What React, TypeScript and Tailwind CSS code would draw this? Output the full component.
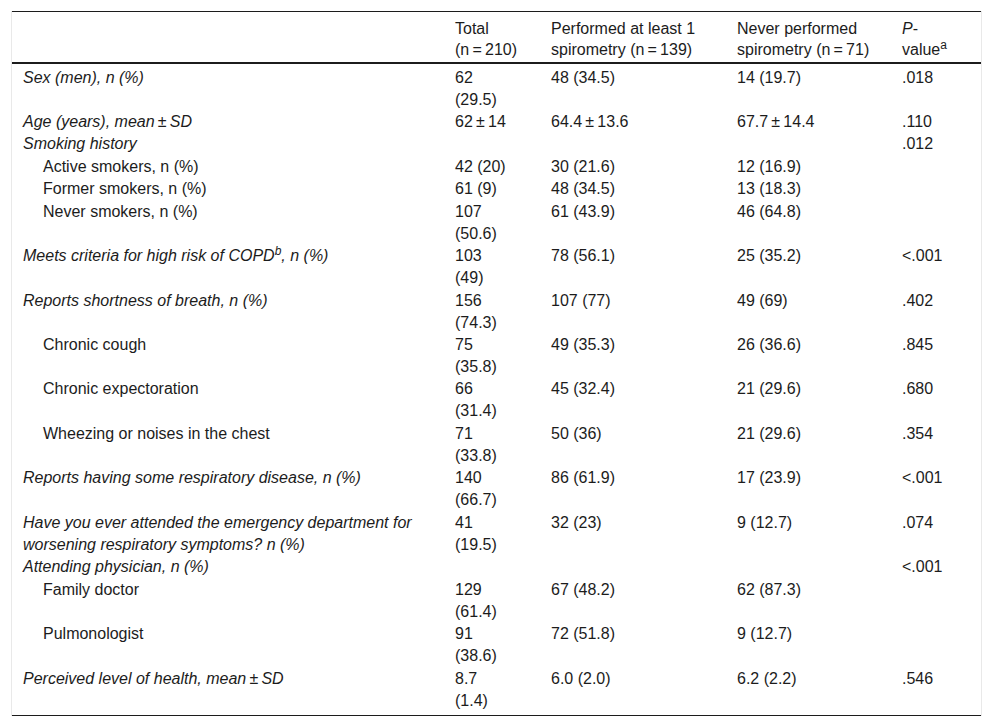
import type { ReactNode } from 'react';

type Row = {
    label: ReactNode;
    italic?: boolean;
    indent?: boolean;
    total?: ReactNode;
    performed?: ReactNode;
    never?: ReactNode;
    p?: string;
};

const T = '\u2009';

// keeps "62 ± 14" and "(n = 210)" on one line, with thin spaces like the print layout
function NoWrap({ children }: { children: ReactNode }) {
    return <span className="whitespace-nowrap">{children}</span>;
}

function pm(a: string, b: string) {
    return <NoWrap>{`${a}${T}±${T}${b}`}</NoWrap>;
}

const rows: Row[] = [
    { label: 'Sex (men), n (%)', italic: true, total: '62 (29.5)', performed: '48 (34.5)', never: '14 (19.7)', p: '.018' },
    {
        label: <>Age (years), mean{pm('', 'SD')}</>,
        italic: true,
        total: pm('62', '14'),
        performed: pm('64.4', '13.6'),
        never: pm('67.7', '14.4'),
        p: '.110',
    },
    { label: 'Smoking history', italic: true, p: '.012' },
    { label: 'Active smokers, n (%)', indent: true, total: '42 (20)', performed: '30 (21.6)', never: '12 (16.9)' },
    { label: 'Former smokers, n (%)', indent: true, total: '61 (9)', performed: '48 (34.5)', never: '13 (18.3)' },
    { label: 'Never smokers, n (%)', indent: true, total: '107 (50.6)', performed: '61 (43.9)', never: '46 (64.8)' },
    {
        label: (
            <>
                Meets criteria for high risk of COPD<sup>b</sup>, n (%)
            </>
        ),
        italic: true,
        total: '103 (49)',
        performed: '78 (56.1)',
        never: '25 (35.2)',
        p: '<.001',
    },
    { label: 'Reports shortness of breath, n (%)', italic: true, total: '156 (74.3)', performed: '107 (77)', never: '49 (69)', p: '.402' },
    { label: 'Chronic cough', indent: true, total: '75 (35.8)', performed: '49 (35.3)', never: '26 (36.6)', p: '.845' },
    { label: 'Chronic expectoration', indent: true, total: '66 (31.4)', performed: '45 (32.4)', never: '21 (29.6)', p: '.680' },
    { label: 'Wheezing or noises in the chest', indent: true, total: '71 (33.8)', performed: '50 (36)', never: '21 (29.6)', p: '.354' },
    { label: 'Reports having some respiratory disease, n (%)', italic: true, total: '140 (66.7)', performed: '86 (61.9)', never: '17 (23.9)', p: '<.001' },
    {
        label: 'Have you ever attended the emergency department for worsening respiratory symptoms? n (%)',
        italic: true,
        total: '41 (19.5)',
        performed: '32 (23)',
        never: '9 (12.7)',
        p: '.074',
    },
    { label: 'Attending physician, n (%)', italic: true, p: '<.001' },
    { label: 'Family doctor', indent: true, total: '129 (61.4)', performed: '67 (48.2)', never: '62 (87.3)' },
    { label: 'Pulmonologist', indent: true, total: '91 (38.6)', performed: '72 (51.8)', never: '9 (12.7)' },
    {
        label: <>Perceived level of health, mean{pm('', 'SD')}</>,
        italic: true,
        total: '8.7 (1.4)',
        performed: '6.0 (2.0)',
        never: '6.2 (2.2)',
        p: '.546',
    },
];

const cell = 'align-top text-left font-normal pl-[11px] pt-[0.45px]';
const head = 'pl-[11px] pt-[7px] pb-[2px] text-left align-top font-normal';

export default function App() {
    return (
        <div className="min-h-[726px] bg-white pt-[11px] font-['Liberation_Sans',Arial,sans-serif] text-[16px] text-[#1c1c1c]">
            <div className="ml-[11px] w-[971px] border-x border-[#e9e9e9]">
                <table className="w-full table-fixed border-collapse border-t border-b border-[#1c1c1c] leading-[22px]">
                    <colgroup>
                        <col className="w-[432px]" />
                        <col className="w-[96px]" />
                        <col className="w-[186px]" />
                        <col className="w-[165px]" />
                        <col className="w-[90px]" />
                    </colgroup>
                    <thead>
                        <tr className="border-b-2 border-[#1c1c1c] leading-[20.5px]">
                            <th className="pt-[7px] pb-[2px]" />
                            <th className={`${head} pr-[30px]`}>
                                Total <NoWrap>{`(n${T}=${T}210)`}</NoWrap>
                            </th>
                            <th className={`${head} pr-[15px]`}>
                                Performed at least 1 spirometry <NoWrap>{`(n${T}=${T}139)`}</NoWrap>
                            </th>
                            <th className={`${head} pr-[10px]`}>
                                Never performed spirometry <NoWrap>{`(n${T}=${T}71)`}</NoWrap>
                            </th>
                            <th className={`${head} pr-[34px]`}>
                                <i>P</i>-value<sup>a</sup>
                            </th>
                        </tr>
                    </thead>
                    <tbody>
                        {rows.map((r, i) => (
                            <tr
                                key={i}
                                className={
                                    i === 0
                                        ? '[&>td]:pt-[2.5px]'
                                        : i === rows.length - 1
                                          ? '[&>td]:pb-[3px]'
                                          : ''
                                }
                            >
                                <td className={`${cell} pr-[12px] ${r.italic ? 'italic' : ''}`}>
                                    <div className={r.indent ? 'pl-[20px]' : ''}>{r.label}</div>
                                </td>
                                <td className={`${cell} pr-[30px]`}>{r.total}</td>
                                <td className={`${cell} pr-[15px]`}>{r.performed}</td>
                                <td className={`${cell} pr-[10px]`}>{r.never}</td>
                                <td className={`${cell} pr-[34px]`}>{r.p}</td>
                            </tr>
                        ))}
                    </tbody>
                </table>
            </div>
        </div>
    );
}
